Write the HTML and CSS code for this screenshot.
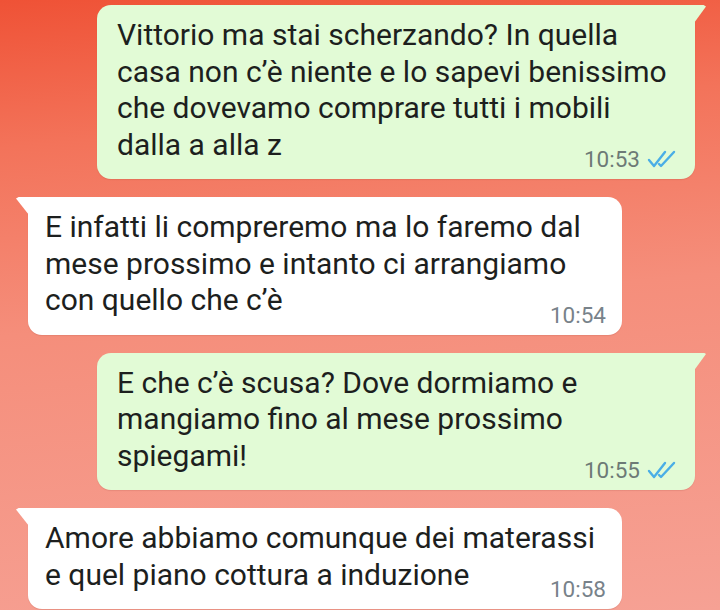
FILE: index.html
```html
<!DOCTYPE html>
<html lang="it">
<head>
    <meta charset="UTF-8">
    <meta name="viewport" content="width=device-width, initial-scale=1.0">
    <title>Chat</title>
    <link rel="stylesheet" href="styles.css">
</head>
<body>
    <div class="chat">
        <div class="bubble out">
            <p class="text">Vittorio ma stai scherzando? In quella<br>casa non c’è niente e lo sapevi benissimo<br>che dovevamo comprare tutti i mobili<br>dalla a alla z</p>
            <div class="meta">
                <span class="time">10:53</span>
                <svg class="ticks" viewBox="0 0 30 18" width="30" height="18">
                    <path d="M2 10 L7 16 L18 2" />
                    <path d="M12 14 L14 16 L27 2" />
                </svg>
            </div>
        </div>

        <div class="bubble in">
            <p class="text">E infatti li compreremo ma lo faremo dal<br>mese prossimo e intanto ci arrangiamo<br>con quello che c’è</p>
            <div class="meta">
                <span class="time">10:54</span>
            </div>
        </div>

        <div class="bubble out">
            <p class="text">E che c’è scusa? Dove dormiamo e<br>mangiamo fino al mese prossimo<br>spiegami!</p>
            <div class="meta">
                <span class="time">10:55</span>
                <svg class="ticks" viewBox="0 0 30 18" width="30" height="18">
                    <path d="M2 10 L7 16 L18 2" />
                    <path d="M12 14 L14 16 L27 2" />
                </svg>
            </div>
        </div>

        <div class="bubble in">
            <p class="text">Amore abbiamo comunque dei materassi<br>e quel piano cottura a induzione</p>
            <div class="meta">
                <span class="time">10:58</span>
            </div>
        </div>
    </div>
</body>
</html>
```

FILE: styles.css
```css
body {
    margin: 0;
    height: 610px;
    overflow: hidden;
    font-family: Roboto, "Noto Sans", sans-serif;
    background: linear-gradient(175deg, #ef5236 0%, #f3735a 22%, #f58e7b 50%, #f6a194 100%);
}
.chat {
    display: flex;
    flex-direction: column;
    gap: 18px;
    padding-top: 5px;
}
.bubble {
    position: relative;
    box-sizing: border-box;
    padding: 12px 18px 9px 20px;
    border-radius: 14px;
    box-shadow: 0 1px 1px rgba(120, 40, 30, 0.12);
}
.bubble.out {
    align-self: flex-end;
    width: 598px;
    margin-right: 25px;
    background-color: #e2fbd6;
    border-top-right-radius: 0;
}
.bubble.in {
    align-self: flex-start;
    width: 594px;
    margin-left: 28px;
    padding-left: 17px;
    padding-right: 16px;
    background-color: #ffffff;
    border-top-left-radius: 0;
}
.bubble.out::after {
    content: "";
    position: absolute;
    top: 0;
    right: -11px;
    width: 12px;
    height: 18px;
    background-color: #e2fbd6;
    clip-path: polygon(0 0, 80% 0, 100% 8%, 0 100%);
}
.bubble.in::after {
    content: "";
    position: absolute;
    top: 0;
    left: -12px;
    width: 13px;
    height: 18px;
    background-color: #ffffff;
    clip-path: polygon(20% 0, 100% 0, 100% 100%, 0 8%);
}
.text {
    margin: 0;
    font-size: 30px;
    line-height: 36.5px;
    color: #1d1f1e;
}
.meta {
    display: flex;
    justify-content: flex-end;
    align-items: center;
    gap: 7px;
    height: 22px;
    margin-top: -15px;
}
.time {
    font-size: 22.5px;
    line-height: 22px;
    color: #6d7a76;
}
.in .time {
    color: #78828a;
}
.ticks {
    fill: none;
    stroke: #4aaee6;
    stroke-width: 2.4;
    stroke-linecap: round;
    stroke-linejoin: round;
}
```
